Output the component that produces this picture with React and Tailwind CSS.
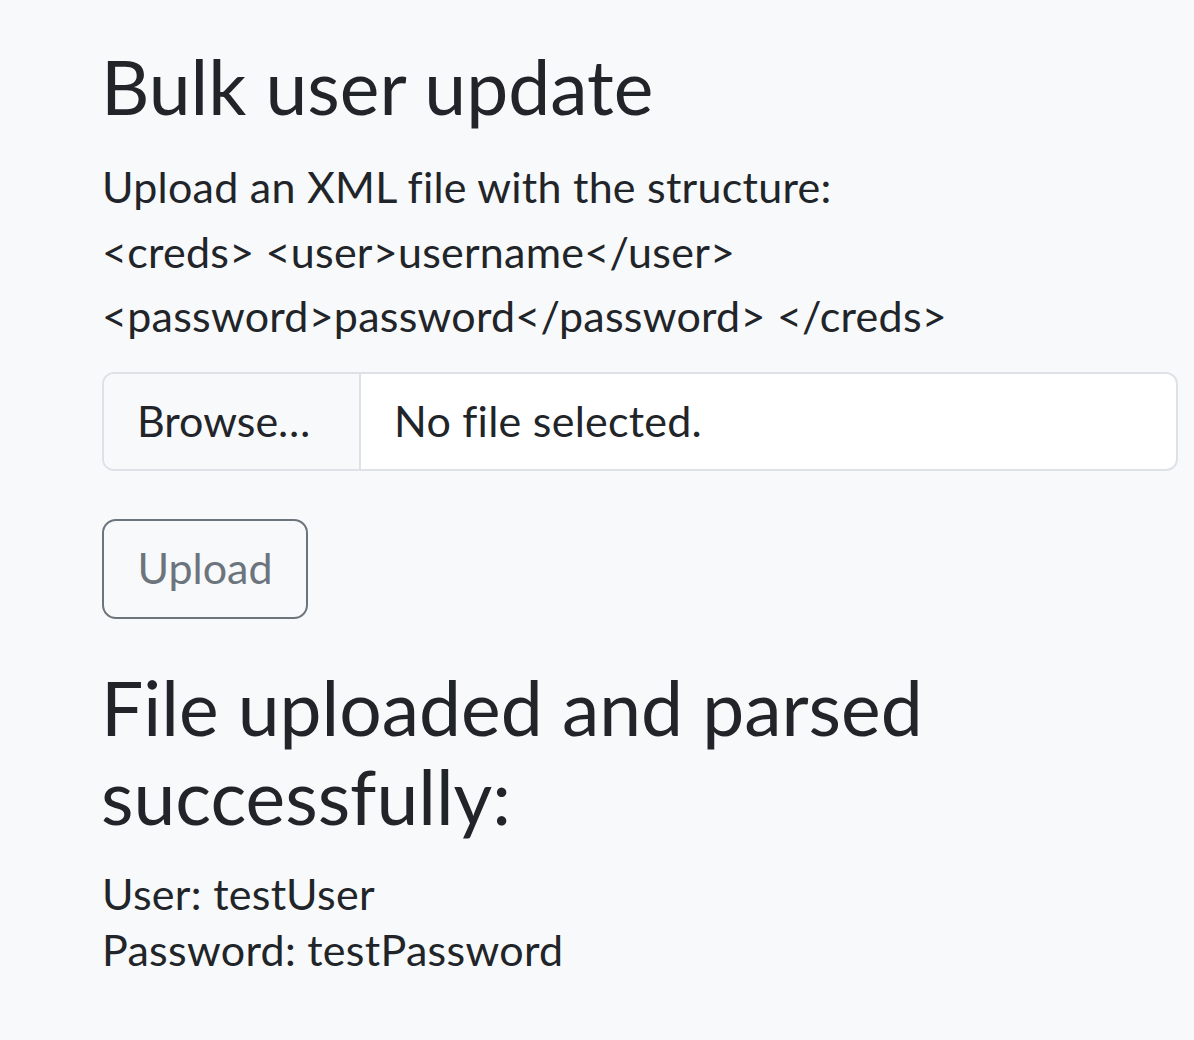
export default function App() {
  return (
    <div
      className="min-h-[1040px] bg-[#f8f9fa] text-[#212529]"
      style={{ fontFamily: 'Lato, "Noto Sans", sans-serif' }}
    >
      <div className="pl-[102px] pr-4 pt-[41px]">
        <h1 className="-ml-[1px] text-[75px] leading-[90px] font-normal">Bulk user update</h1>

        <p className="mt-[24px] text-[43px] leading-[64.5px] tracking-[0.25px]">
          Upload an XML file with the structure:
          <br />
          &lt;creds&gt; &lt;user&gt;username&lt;/user&gt;
          <br />
          &lt;password&gt;password&lt;/password&gt; &lt;/creds&gt;
        </p>

        <div className="mt-[23px] flex h-[99px] w-[1076px] overflow-hidden rounded-[12px] border-2 border-[#dee2e6] bg-white text-[43px]">
          <div className="flex w-[257px] items-center border-r-2 border-[#dee2e6] bg-[#f8f9fa] pl-[33px]">
            Browse…
          </div>
          <div className="flex items-center pl-[33px] tracking-[0.25px]">No file selected.</div>
        </div>

        <button className="mt-[48px] h-[100px] w-[206px] rounded-[14px] border-2 border-[#6c757d] text-[43px] text-[#6c757d]">
          Upload
        </button>

        <h2 className="-ml-[1px] mt-[44px] text-[75px] leading-[89px] font-normal">
          File uploaded and parsed
          <br />
          successfully:
        </h2>

        <div className="mt-[25px] text-[43px] leading-[56px] tracking-[0.3px]">
          <div>User: testUser</div>
          <div>Password: testPassword</div>
        </div>
      </div>
    </div>
  );
}
